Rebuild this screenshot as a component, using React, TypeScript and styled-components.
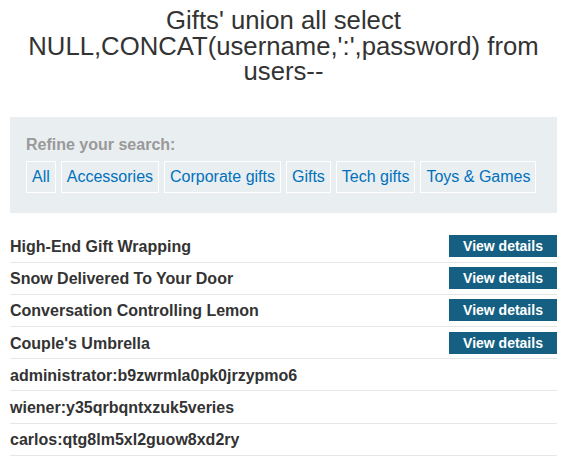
import React from "react";
import styled, { createGlobalStyle } from "styled-components";

const Global = createGlobalStyle`
  html, body { margin: 0; padding: 0; background: #fff; }
  body { font-family: "Liberation Sans", Arial, sans-serif; color: #333; }
`;

const Page = styled.div`
  width: 547px;
  margin: 0 0 0 10px;
  padding-top: 8px;
`;

const Title = styled.h1`
  margin: 0;
  font-size: 25.7px;
  font-weight: 400;
  line-height: 25.5px;
  text-align: center;
  color: #333;
`;

const FilterBox = styled.section`
  margin-top: 32px;
  background: #e9eef1;
  padding: 19px 16px 20px;
`;

const FilterLabel = styled.div`
  font-size: 16px;
  font-weight: 700;
  line-height: 18px;
  color: #999;
`;

const FilterRow = styled.div`
  display: flex;
  flex-wrap: wrap;
  gap: 5px;
  margin-top: 7px;
`;

const FilterLink = styled.a`
  display: block;
  border: 1px solid #fff;
  padding: 6px 5px;
  font-size: 16px;
  line-height: 18px;
  color: #0071bc;
  text-decoration: none;
`;

const List = styled.div`
  margin-top: 18px;
`;

const Row = styled.div`
  display: flex;
  align-items: center;
  justify-content: space-between;
  height: 31.2px;
  border-bottom: 1px solid #e6e6e6;
`;

const Name = styled.span`
  font-size: 16px;
  font-weight: 700;
  color: #333;
  padding-top: 2px;
`;

const DetailsButton = styled.a`
  display: block;
  width: 108px;
  box-sizing: border-box;
  text-align: center;
  background: #155f82;
  color: #fff;
  font-size: 14px;
  font-weight: 700;
  line-height: 16px;
  padding: 3px 0;
  text-decoration: none;
`;

const filters = ["All", "Accessories", "Corporate gifts", "Gifts", "Tech gifts", "Toys & Games"];

const rows: { name: string; button: boolean }[] = [
  { name: "High-End Gift Wrapping", button: true },
  { name: "Snow Delivered To Your Door", button: true },
  { name: "Conversation Controlling Lemon", button: true },
  { name: "Couple's Umbrella", button: true },
  { name: "administrator:b9zwrmla0pk0jrzypmo6", button: false },
  { name: "wiener:y35qrbqntxzuk5veries", button: false },
  { name: "carlos:qtg8lm5xl2guow8xd2ry", button: false },
];

export default function App() {
  return (
    <>
      <Global />
      <Page>
        <Title>Gifts' union all select NULL,CONCAT(username,':',password) from users--</Title>
        <FilterBox>
          <FilterLabel>Refine your search:</FilterLabel>
          <FilterRow>
            {filters.map((f) => (
              <FilterLink key={f} href="#">{f}</FilterLink>
            ))}
          </FilterRow>
        </FilterBox>
        <List>
          {rows.map((r) => (
            <Row key={r.name}>
              <Name>{r.name}</Name>
              {r.button && <DetailsButton href="#">View details</DetailsButton>}
            </Row>
          ))}
        </List>
      </Page>
    </>
  );
}
